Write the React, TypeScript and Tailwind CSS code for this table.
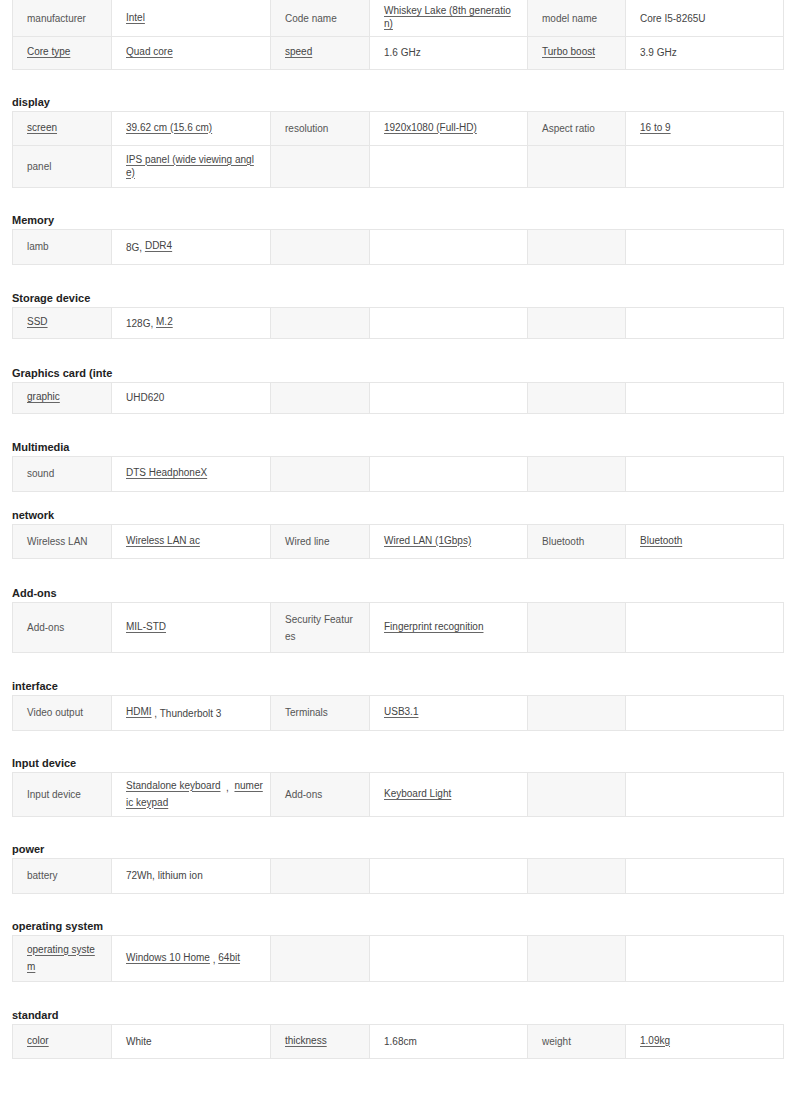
import React from "react"

type Part = string | { a: string }
type Row = { h: string; lh?: string; cells: Part[][] }
type Section = { title?: string; mt?: string; rows: Row[] }

const L = (a: string): Part => ({ a })

// row heights include the bottom border (border-box)
const sections: Section[] = [
  {
    rows: [
      {
        h: "h-[37px]",
        lh: "leading-[11px]",
        cells: [
          ["manufacturer"],
          [L("Intel")],
          ["Code name"],
          [L("Whiskey Lake (8th generatio\nn)")],
          ["model name"],
          ["Core I5-8265U"]
        ]
      },
      {
        h: "h-[33px]",
        cells: [
          [L("Core type")],
          [L("Quad core")],
          [L("speed")],
          ["1.6 GHz"],
          [L("Turbo boost")],
          ["3.9 GHz"]
        ]
      }
    ]
  },
  {
    title: "display",
    mt: "mt-[25px]",
    rows: [
      {
        h: "h-[34px]",
        cells: [
          [L("screen")],
          [L("39.62 cm (15.6 cm)")],
          ["resolution"],
          [L("1920x1080 (Full-HD)")],
          ["Aspect ratio"],
          [L("16 to 9")]
        ]
      },
      {
        h: "h-[42px]",
        lh: "leading-[11px]",
        cells: [["panel"], [L("IPS panel (wide viewing angl\ne)")], [], [], [], []]
      }
    ]
  },
  {
    title: "Memory",
    mt: "mt-[25px]",
    rows: [{ h: "h-[35px]", cells: [["lamb"], ["8G, ", L("DDR4")], [], [], [], []] }]
  },
  {
    title: "Storage device",
    mt: "mt-[26px]",
    rows: [{ h: "h-[31px]", cells: [[L("SSD")], ["128G, ", L("M.2")], [], [], [], []] }]
  },
  {
    title: "Graphics card (inte",
    mt: "mt-[27px]",
    rows: [{ h: "h-[31px]", cells: [[L("graphic")], ["UHD620"], [], [], [], []] }]
  },
  {
    title: "Multimedia",
    mt: "mt-[26px]",
    rows: [{ h: "h-[35px]", cells: [["sound"], [L("DTS HeadphoneX")], [], [], [], []] }]
  },
  {
    title: "network",
    mt: "mt-[16px]",
    rows: [
      {
        h: "h-[34px]",
        cells: [
          ["Wireless LAN"],
          [L("Wireless LAN ac")],
          ["Wired line"],
          [L("Wired LAN (1Gbps)")],
          ["Bluetooth"],
          [L("Bluetooth")]
        ]
      }
    ]
  },
  {
    title: "Add-ons",
    mt: "mt-[27px]",
    rows: [
      {
        h: "h-[50px]",
        lh: "leading-[17px]",
        cells: [
          ["Add-ons"],
          [L("MIL-STD")],
          ["Security Featur\nes"],
          [L("Fingerprint recognition")],
          [],
          []
        ]
      }
    ]
  },
  {
    title: "interface",
    mt: "mt-[26px]",
    rows: [
      {
        h: "h-[35px]",
        cells: [
          ["Video output"],
          [L("HDMI"), " , Thunderbolt 3"],
          ["Terminals"],
          [L("USB3.1")],
          [],
          []
        ]
      }
    ]
  },
  {
    title: "Input device",
    mt: "mt-[25px]",
    rows: [
      {
        h: "h-[44px]",
        lh: "leading-[15px]",
        cells: [
          ["Input device"],
          [L("Standalone keyboard"), "  ,  ", L("numer\nic keypad")],
          ["Add-ons"],
          [L("Keyboard Light")],
          [],
          []
        ]
      }
    ]
  },
  {
    title: "power",
    mt: "mt-[25px]",
    rows: [{ h: "h-[35px]", cells: [["battery"], ["72Wh, lithium ion"], [], [], [], []] }]
  },
  {
    title: "operating system",
    mt: "mt-[25px]",
    rows: [
      {
        h: "h-[46px]",
        lh: "leading-[15px]",
        cells: [
          [L("operating syste\nm")],
          [L("Windows 10 Home"), " , ", L("64bit")],
          [],
          [],
          [],
          []
        ]
      }
    ]
  },
  {
    title: "standard",
    mt: "mt-[26px]",
    rows: [
      {
        h: "h-[34px]",
        cells: [
          [L("color")],
          ["White"],
          [L("thickness")],
          ["1.68cm"],
          ["weight"],
          [L("1.09kg")]
        ]
      }
    ]
  }
]

const Cell = ({ parts, index, lh }: { parts: Part[]; index: number; lh?: string }) => {
  const isLabel = index % 2 === 0
  const last = index === 5
  return (
    <div
      className={`flex items-center pl-[14px] pr-1 ${last ? "" : "border-r border-[#e6e6e6]"} ${isLabel ? "bg-[#f7f7f7] text-[#555]" : "bg-white text-[#444]"}`}>
      <div className={`whitespace-pre-line ${lh ?? "leading-[14px]"}`}>
        {parts.map((p, i) =>
          typeof p === "string" ? (
            <span key={i} className="whitespace-pre">{p}</span>
          ) : (
            <span
              key={i}
              className="underline underline-offset-2 decoration-[#666] text-[#444] align-[2px]">
              {p.a}
            </span>
          )
        )}
      </div>
    </div>
  )
}

const SpecTable = ({ rows, first }: { rows: Row[]; first: boolean }) => (
  <div
    className={`w-[772px] border-x border-t border-[#e6e6e6] ${first ? "-mt-px" : ""}`}>
    {rows.map((row, ri) => (
      <div
        key={ri}
        className={`grid grid-cols-[99px_159px_99px_158px_98px_157px] border-b border-[#e6e6e6] ${row.h}`}>
        {row.cells.map((c, ci) => (
          <Cell key={ci} parts={c} index={ci} lh={row.lh} />
        ))}
      </div>
    ))}
  </div>
)

const App = () => {
  return (
    <div
      className="min-h-[1109px] bg-white pl-[12px] pb-[50px] text-[10px]"
      style={{ fontFamily: '"Liberation Sans", Arial, sans-serif' }}>
      {sections.map((s, si) => (
        <div key={si} className={s.mt ?? ""}>
          {s.title && (
            <div className="text-[11px] font-bold text-[#222] leading-[14px] pb-[2px]">
              {s.title}
            </div>
          )}
          <SpecTable rows={s.rows} first={si === 0} />
        </div>
      ))}
    </div>
  )
}

export default App
